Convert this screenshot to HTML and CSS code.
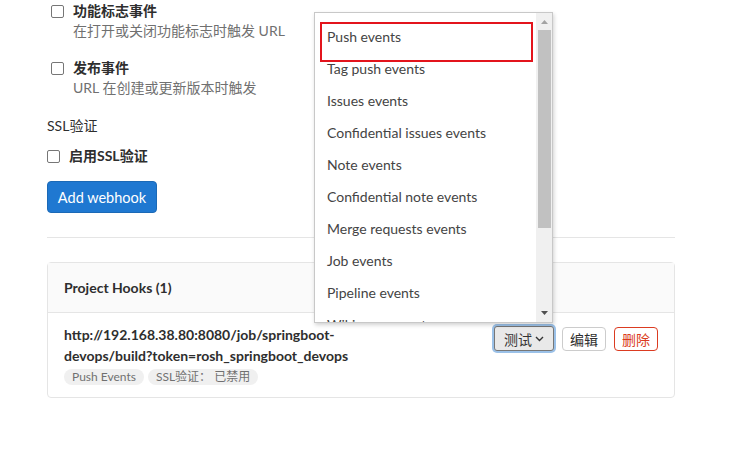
FILE: index.html
```html
<!DOCTYPE html>
<html lang="zh">
<head>
<meta charset="utf-8">
<link rel="stylesheet" href="styles.css">
</head>
<body>
<div class="page">
  <div class="check check-indent">
    <span class="box"></span>
    <div class="check-text">
      <div class="check-title">功能标志事件</div>
      <div class="check-desc">在打开或关闭功能标志时触发 URL</div>
    </div>
  </div>
  <div class="check check-indent group-gap">
    <span class="box"></span>
    <div class="check-text">
      <div class="check-title">发布事件</div>
      <div class="check-desc">URL 在创建或更新版本时触发</div>
    </div>
  </div>
  <div class="section-title">SSL验证</div>
  <div class="check ssl-row">
    <span class="box"></span>
    <div class="check-title">启用SSL验证</div>
  </div>
  <button class="btn-primary">Add webhook</button>
  <hr class="divider">
  <div class="card">
    <div class="card-header">Project Hooks (1)</div>
    <div class="card-body">
      <div class="hook-info">
        <div class="hook-url">http://192.168.38.80:8080/job/springboot-devops/build?token=rosh_springboot_devops</div>
        <div class="badges">
          <span class="badge">Push Events</span>
          <span class="badge">SSL验证： 已禁用</span>
        </div>
      </div>
      <div class="hook-actions">
        <span class="btn-test">测试<svg class="chev" width="9" height="6" viewBox="0 0 9 6"><path d="M1 1 L4.5 4.5 L8 1" fill="none" stroke="#333" stroke-width="1.4"/></svg></span>
        <span class="btn">编辑</span>
        <span class="btn btn-danger">删除</span>
      </div>
    </div>
  </div>
</div>

<div class="dropdown">
  <ul class="dd-list">
    <li>Push events</li>
    <li>Tag push events</li>
    <li>Issues events</li>
    <li>Confidential issues events</li>
    <li>Note events</li>
    <li>Confidential note events</li>
    <li>Merge requests events</li>
    <li>Job events</li>
    <li>Pipeline events</li>
    <li>Wiki page events</li>
  </ul>
  <div class="dd-scroll">
    <svg class="arrow-up" width="7" height="4" viewBox="0 0 7 4"><path d="M0 4 L3.5 0 L7 4 Z" fill="#a3a3a3"/></svg>
    <div class="thumb"></div>
    <svg class="arrow-down" width="7" height="4" viewBox="0 0 7 4"><path d="M0 0 L3.5 4 L7 0 Z" fill="#505050"/></svg>
  </div>
  <div class="highlight"></div>
</div>
</body>
</html>
```

FILE: styles.css
```css
* { box-sizing: border-box; }
body {
  margin: 0;
  background: #fff;
  font-family: "Lato", "Noto Sans CJK SC", sans-serif;
  font-size: 14px;
  color: #333;
}
.page {
  width: 675px;
  padding-left: 47px;
  padding-top: 1px;
}
.check {
  display: flex;
  align-items: flex-start;
  gap: 9px;
}
.check-indent { padding-left: 4px; }
.group-gap { margin-top: 17px; }
.box {
  flex: none;
  width: 13px;
  height: 13px;
  margin-top: 4px;
  border: 1px solid #767676;
  border-radius: 2px;
  background: #fff;
}
.check-title {
  line-height: 20px;
  font-weight: 700;
  color: #2e2e2e;
}
.check-desc {
  line-height: 20px;
  color: #707070;
}
.section-title {
  margin-top: 18px;
  line-height: 20px;
  color: #2e2e2e;
}
.ssl-row { margin-top: 10px; }
.btn-primary {
  display: block;
  margin-top: 15px;
  width: 110px;
  height: 32px;
  padding: 0;
  border: 1px solid #1b69b6;
  border-radius: 4px;
  background: #1f78d1;
  color: #fff;
  font-family: inherit;
  font-size: 14.5px;
}
.divider {
  margin: 24px 0 0;
  border: 0;
  border-top: 1px solid #e5e5e5;
  width: 628px;
}
.card {
  margin-top: 24px;
  width: 628px;
  border: 1px solid #e5e5e5;
  border-radius: 4px;
}
.card-header {
  height: 50px;
  padding: 0 16px;
  display: flex;
  align-items: center;
  background: #fafafa;
  border-bottom: 1px solid #e5e5e5;
  font-weight: 700;
  color: #2e2e2e;
}
.card-body {
  display: flex;
  justify-content: space-between;
  align-items: flex-start;
  padding: 11px 16px 12px;
}
.hook-info { width: 310px; }
.hook-url {
  font-weight: 700;
  line-height: 21px;
  color: #2e2e2e;
  white-space: normal;
  overflow-wrap: normal;
  word-break: normal;
}
.badges {
  display: flex;
  gap: 4px;
  margin-top: 3px;
}
.badge {
  display: inline-block;
  height: 16px;
  line-height: 16px;
  padding: 0 8px;
  border-radius: 8px;
  background: #f0f0f0;
  color: #707070;
  font-size: 12px;
}
.hook-actions {
  display: flex;
  align-items: center;
  gap: 8px;
  margin-top: 2px;
}
.btn-test {
  display: flex;
  align-items: center;
  justify-content: center;
  gap: 3px;
  width: 60px;
  height: 25px;
  border: 1px solid #777;
  box-shadow: 0 0 0 2px #9bc1e8;
  border-radius: 3px;
  background: #e9e9e9;
  color: #333;
}
.chev { margin-top: 1px; }
.btn {
  display: flex;
  align-items: center;
  justify-content: center;
  width: 44px;
  height: 24px;
  border: 1px solid #ccc;
  border-radius: 4px;
  background: #fff;
  color: #2e2e2e;
}
.btn-danger {
  border-color: #db3b21;
  color: #db3b21;
}
.dropdown {
  position: absolute;
  left: 314px;
  top: 12px;
  width: 239px;
  height: 311px;
  border: 1px solid #c8c8c8;
  background: #fff;
  box-shadow: 1px 2px 4px rgba(0,0,0,0.18);
  overflow: hidden;
  display: flex;
}
.dd-list {
  list-style: none;
  margin: 0;
  padding: 8px 0 0 12px;
  flex: 1;
}
.dd-list li {
  height: 32px;
  line-height: 32px;
  color: #444;
  white-space: nowrap;
}
.dd-scroll {
  width: 16px;
  background: #f0f0f0;
  position: relative;
}
.arrow-up { position: absolute; left: 5px; top: 7px; }
.arrow-down { position: absolute; left: 5px; top: 298px; }
.thumb {
  position: absolute;
  left: 2px;
  top: 17px;
  width: 13px;
  height: 198px;
  background: #c1c1c1;
}
.highlight {
  position: absolute;
  left: 5px;
  top: 9px;
  width: 213px;
  height: 40px;
  border: 2px solid #e3141c;
}
```
